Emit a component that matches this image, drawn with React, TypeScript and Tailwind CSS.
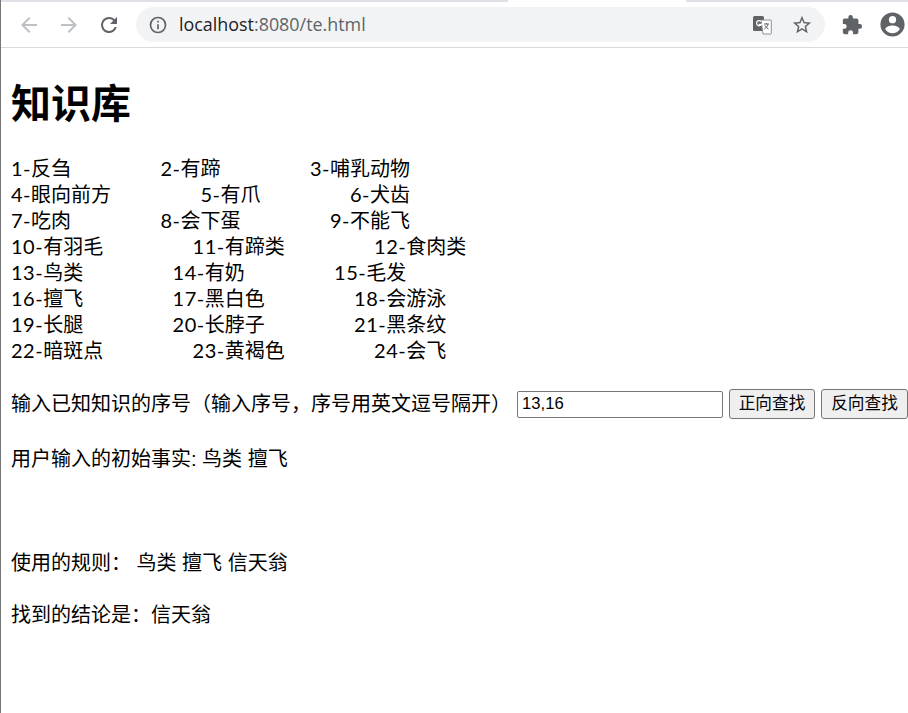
import React from 'react';

const rows = [
  ['1-反刍', '2-有蹄', '3-哺乳动物'],
  ['4-眼向前方', '5-有爪', '6-犬齿'],
  ['7-吃肉', '8-会下蛋', '9-不能飞'],
  ['10-有羽毛', '11-有蹄类', '12-食肉类'],
  ['13-鸟类', '14-有奶', '15-毛发'],
  ['16-擅飞', '17-黑白色', '18-会游泳'],
  ['19-长腿', '20-长脖子', '21-黑条纹'],
  ['22-暗斑点', '23-黄褐色', '24-会飞'],
];

const Toolbar: React.FC = () => (
  <div>
    {/* tab strip, the white part is the active tab */}
    <div className="flex h-[2px]">
      <div className="w-[507px] bg-[#dee1e6]" />
      <div className="flex-1 bg-white" />
      <div className="w-[222px] bg-[#dee1e6]" />
    </div>
    <div className="flex h-[46px] items-center border-b border-[#d9dadc] bg-white">
      <svg className="ml-[16px] h-[24px] w-[24px]" viewBox="0 0 24 24" fill="#bdc1c6">
        <path d="M20 11H7.83l5.59-5.59L12 4l-8 8 8 8 1.41-1.41L7.83 13H20v-2z" />
      </svg>
      <svg className="ml-[16px] h-[24px] w-[24px]" viewBox="0 0 24 24" fill="#bdc1c6">
        <path d="M12 4l-1.41 1.41L16.17 11H4v2h12.17l-5.58 5.59L12 20l8-8z" />
      </svg>
      <svg className="ml-[16px] h-[24px] w-[24px]" viewBox="0 0 24 24" fill="#5f6368">
        <path d="M17.65 6.35A7.96 7.96 0 0 0 12 4a8 8 0 1 0 7.73 10h-2.08A6 6 0 1 1 12 6c1.66 0 3.14.69 4.22 1.78L13 11h7V4l-2.35 2.35z" />
      </svg>
      <div className="ml-[15px] flex h-[35px] w-[689px] items-center rounded-full bg-[#f1f3f4]">
        <svg className="ml-[12px] h-[20px] w-[20px]" viewBox="0 0 24 24" fill="#5f6368">
          <path d="M11 7h2v2h-2zm0 4h2v6h-2zm1-9a10 10 0 1 0 0 20 10 10 0 0 0 0-20zm0 18a8 8 0 1 1 0-16 8 8 0 0 1 0 16z" />
        </svg>
        <span className="ml-[11px] mb-[2px] font-['Open_Sans',sans-serif] text-[17.9px] text-[#5f6368]">
          <span className="text-[#202124]">localhost</span>:8080/te.html
        </span>
        <svg className="ml-auto h-[20px] w-[20px]" viewBox="0 0 20 20">
          <rect x="1" y="1" width="11" height="15" rx="1.5" fill="#5f6368" />
          <path d="M9 5h9.5a.8.8 0 0 1 .8.8v12.4a.8.8 0 0 1-.8.8H11l-2-14z" fill="#fff" stroke="#80868b" strokeWidth="0.9" />
          <path d="M9.2 6.5a2.6 2.6 0 1 0 .2 3H6.7" fill="none" stroke="#fff" strokeWidth="1.3" />
          <path d="M12 9h5M14.5 8v1M16 9c-.5 2.5-2 4-3.6 5M13 10.5c.7 1.4 2 2.8 3.5 3.6" fill="none" stroke="#5f6368" strokeWidth="1" />
        </svg>
        <svg className="ml-[19px] mr-[12px] h-[22px] w-[22px]" viewBox="0 0 24 24" fill="#5f6368">
          <path d="M22 9.24l-7.19-.62L12 2 9.19 8.63 2 9.24l5.46 4.73L5.82 21 12 17.27 18.18 21l-1.63-7.03L22 9.24zM12 15.4l-3.76 2.27 1-4.28-3.32-2.88 4.38-.38L12 6.1l1.71 4.04 4.38.38-3.32 2.88 1 4.28L12 15.4z" />
        </svg>
      </div>
      <svg className="ml-[16px] h-[22px] w-[22px] shrink-0" viewBox="0 0 24 24" fill="#5f6368">
        <path d="M20.5 11H19V7a2 2 0 0 0-2-2h-4V3.5a2.5 2.5 0 0 0-5 0V5H4a2 2 0 0 0-2 2v3.8h1.5a2.7 2.7 0 0 1 0 5.4H2V20a2 2 0 0 0 2 2h3.8v-1.5a2.7 2.7 0 0 1 5.4 0V22H17a2 2 0 0 0 2-2v-4h1.5a2.5 2.5 0 0 0 0-5z" />
      </svg>
      <svg className="ml-[15px] h-[29px] w-[29px] shrink-0" viewBox="0 0 24 24" fill="#5f6368">
        <path d="M12 2a10 10 0 1 0 0 20 10 10 0 0 0 0-20zm0 3a3 3 0 1 1 0 6 3 3 0 0 1 0-6zm0 14.2a7.2 7.2 0 0 1-6-3.22c.03-1.99 4-3.08 6-3.08s5.97 1.09 6 3.08a7.2 7.2 0 0 1-6 3.22z" />
      </svg>
    </div>
  </div>
);

export default function App() {
  return (
    <div className="h-[713px] w-[908px] overflow-hidden border-l border-[#777777] bg-white font-['Liberation_Sans','Noto_Sans_CJK_SC',sans-serif] text-[20px] leading-[26px] text-black">
      <Toolbar />
      <main className="pl-[10px]">
        <h1 className="mt-[33px] text-[40px] font-bold leading-[46px]">知识库</h1>

        <div className="mt-[28px] font-['Lato','Noto_Sans_CJK_SC',sans-serif]">
          {rows.map((row) => (
            <div key={row[0]} className="flex h-[26px] gap-[89.4px] whitespace-nowrap">
              {row.map((item) => {
                const [no, name] = item.split('-');
                return (
                  <span key={item}>
                    <span className="tracking-[0.5px]">{no}-</span>
                    {name}
                  </span>
                );
              })}
            </div>
          ))}
        </div>

        <div className="mt-[26px] flex h-[30px] items-center whitespace-nowrap">
          <span>输入已知知识的序号（输入序号，序号用英文逗号隔开）</span>
          <input
            readOnly
            value="13,16"
            className="ml-[6px] h-[27px] w-[206px] rounded-[2px] border border-[#767676] px-[4px] text-[16.67px] text-black"
          />
          <button className="ml-[6px] h-[30px] w-[87px] rounded-[3px] border border-[#767676] bg-[#efefef] text-[16.67px]">
            正向查找
          </button>
          <button className="ml-[6px] h-[30px] w-[87px] shrink-0 rounded-[3px] border border-[#767676] bg-[#efefef] text-[16.67px]">
            反向查找
          </button>
        </div>

        <p className="mt-[27px]">用户输入的初始事实: 鸟类 擅飞</p>
        <p className="mt-[78px]">使用的规则：&nbsp;鸟类 擅飞 信天翁</p>
        <p className="mt-[26px]">找到的结论是：信天翁</p>
      </main>
    </div>
  );
}
